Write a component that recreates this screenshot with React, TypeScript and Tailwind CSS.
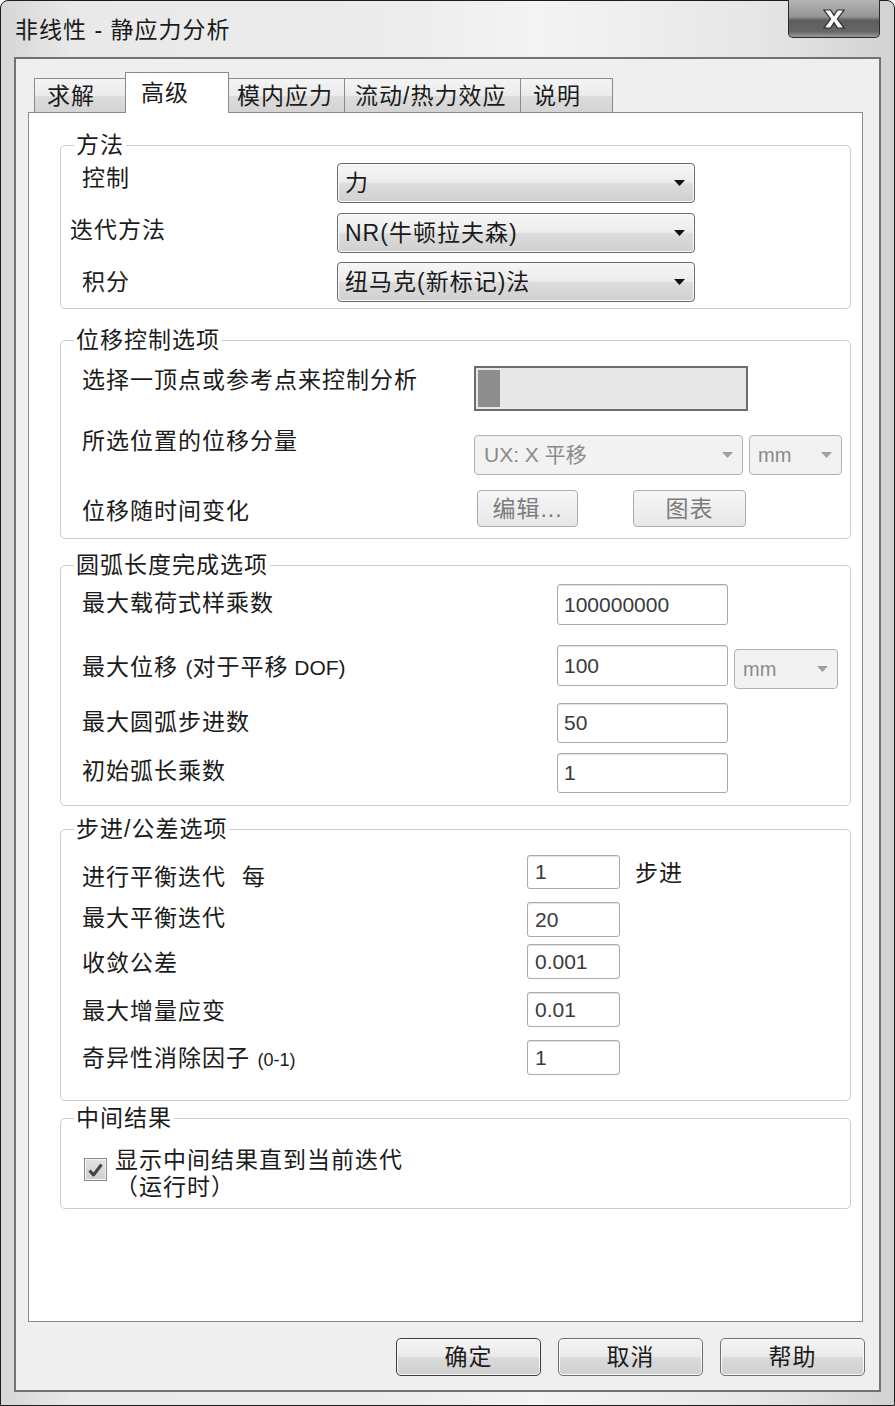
import React from "react";

const Arrow = ({ gray }: { gray?: boolean }) => (
  <svg width="11" height="6" viewBox="0 0 11 6" className="shrink-0">
    <path d="M0 0h11L5.5 6z" fill={gray ? "#a0a0a0" : "#111"} />
  </svg>
);

const Select = ({ text, className }: { text: string; className: string }) => (
  <div
    className={`flex items-center justify-between rounded-[4px] border border-[#6a6a6a] bg-[linear-gradient(180deg,#f6f6f6_0%,#ececec_48%,#dcdcdc_52%,#d0d0d0_100%)] pl-[7px] pr-[9px] shadow-[inset_0_0_0_1px_#fafafa] ${className}`}
  >
    <span>{text}</span>
    <Arrow />
  </div>
);

const DisabledSelect = ({ text, className }: { text: string; className: string }) => (
  <div
    className={`flex items-center justify-between rounded-[4px] border border-[#b2b2b2] bg-[#f2f2f2] pr-[9px] text-[#8a8a8a] ${className}`}
  >
    <span>{text}</span>
    <Arrow gray />
  </div>
);

const Input = ({ value, className }: { value: string; className: string }) => (
  <div
    className={`flex items-center rounded-[3px] border border-[#ababab] bg-white text-[21px] tracking-normal text-[#3a3a3a] shadow-[inset_0_1px_1px_#e2e2e2] ${className}`}
  >
    {value}
  </div>
);

const Group = ({
  title,
  className,
  children,
}: {
  title: string;
  className: string;
  children: React.ReactNode;
}) => (
  <fieldset className={`rounded-[5px] border border-[#cdcdcd] ${className}`}>
    <legend className="ml-[13px] px-[2px] leading-[24px]">{title}</legend>
    {children}
  </fieldset>
);

const tabs = [
  { t: "求解", cls: "w-[92px] pl-[12px]" },
  { t: "高级", cls: "w-[104px] pl-[15px]", active: true },
  { t: "模内应力", cls: "w-[117px] pl-[8px]" },
  { t: "流动/热力效应", cls: "w-[177px] pl-[10px]" },
  { t: "说明", cls: "w-[93px] pl-[12px]" },
];

export default function App() {
  return (
    <div className="h-[1406px] w-[895px] font-['Liberation_Sans','Noto_Sans_CJK_SC',sans-serif] text-[23px] leading-[24px] tracking-[1px] text-[#1b1b1b]">
      <div className="flex h-full flex-col rounded-t-[8px] border border-[#1c1c1c] bg-[linear-gradient(90deg,#d6d6d6_0%,#e9e9e9_8%,#ececec_45%,#f4f4f4_60%,#e6e6e6_85%,#d2d2d2_100%)] px-[13px] pb-[13px]">
        {/* title bar */}
        <div className="flex h-[56px] items-start justify-between">
          <div className="mt-[17px] pl-[1px]">非线性 - 静应力分析</div>
          <div className="-mt-px mr-px flex h-[38px] w-[92px] items-center justify-center rounded-b-[5px] border border-t-0 border-[#2a2a2a] bg-[linear-gradient(180deg,#b4b4b4_0%,#959595_45%,#5e5e5e_55%,#666666_85%,#9a9a9a_100%)]">
            <svg width="22" height="20" viewBox="0 0 22 20">
              <path
                d="M1 1h6.5L11 6.3 14.5 1H21l-6.6 9L21 19h-6.5L11 13.7 7.5 19H1l6.6-9z"
                fill="#fafafa"
                stroke="#2b2b2b"
                strokeWidth="1.2"
              />
            </svg>
          </div>
        </div>

        {/* client area */}
        <div className="flex flex-1 flex-col border-2 border-[#727272] bg-[#efefef] pb-[14px] pl-[12px] pr-[14px] pt-[13px]">
          <div className="flex h-[40px] items-end pl-[6px]">
            {tabs.map((tab, i) =>
              tab.active ? (
                <div
                  key={tab.t}
                  className={`relative z-10 -mb-px -ml-px flex h-[41px] items-center border border-b-0 border-[#8a8a8a] bg-white ${tab.cls}`}
                >
                  {tab.t}
                </div>
              ) : (
                <div
                  key={tab.t}
                  className={`${i === 0 ? "" : "-ml-px"} flex h-[34px] items-center border border-b-0 border-[#8a8a8a] bg-[linear-gradient(180deg,#f4f4f4_0%,#ebebeb_50%,#dcdcdc_52%,#d4d4d4_100%)] ${tab.cls}`}
                >
                  {tab.t}
                </div>
              )
            )}
          </div>

          <div className="mr-[2px] flex-1 border border-[#8a8a8a] bg-white pl-[31px] pr-[11px] pt-[20px]">
            {/* 方法 */}
            <Group title="方法" className="">
              <div className="flex flex-col gap-[10px] pb-[6px] pl-[21px] pt-[6px]">
                <div className="flex items-start">
                  <div className="mt-[3px] w-[255px]">控制</div>
                  <Select text="力" className="h-[40px] w-[358px]" />
                </div>
                <div className="flex items-start">
                  <div className="-ml-[12px] mt-[5px] w-[267px]">迭代方法</div>
                  <Select text="NR(牛顿拉夫森)" className="h-[40px] w-[358px]" />
                </div>
                <div className="-mt-px flex items-start">
                  <div className="mt-[8px] w-[255px]">积分</div>
                  <Select text="纽马克(新标记)法" className="h-[40px] w-[358px]" />
                </div>
              </div>
            </Group>

            {/* 位移控制选项 */}
            <Group title="位移控制选项" className="mt-[19px]">
              <div className="flex flex-col pb-[11px] pl-[21px] pt-[14px]">
                <div className="flex items-start">
                  <div className="mt-[2px] w-[392px]">选择一顶点或参考点来控制分析</div>
                  <div className="h-[45px] w-[274px] border-2 border-[#6c6c6c] bg-[#e8e8e8] pl-[2px] pt-[2px]">
                    <div className="h-[37px] w-[22px] bg-[#8e8e8e]" />
                  </div>
                </div>
                <div className="mt-[24px] flex items-start">
                  <div className="-mt-[6px] w-[392px]">所选位置的位移分量</div>
                  <DisabledSelect text="UX: X 平移" className="h-[40px] w-[269px] pl-[9px] text-[21px] tracking-normal" />
                  <DisabledSelect text="mm" className="ml-[6px] h-[40px] w-[93px] pl-[8px] text-[20px] tracking-normal" />
                </div>
                <div className="mt-[15px] flex items-start">
                  <div className="mt-[9px] w-[392px]">位移随时间变化</div>
                  <div className="ml-[3px] flex h-[37px] w-[101px] items-center justify-center rounded-[4px] border border-[#adadad] bg-[linear-gradient(180deg,#f7f7f7,#e7e7e7)] text-[#7c7c7c]">
                    编辑...
                  </div>
                  <div className="ml-[55px] flex h-[37px] w-[113px] items-center justify-center rounded-[4px] border border-[#adadad] bg-[linear-gradient(180deg,#f7f7f7,#e7e7e7)] text-[#7c7c7c]">
                    图表
                  </div>
                </div>
              </div>
            </Group>

            {/* 圆弧长度完成选项 */}
            <Group title="圆弧长度完成选项" className="mt-[14px]">
              <div className="flex flex-col pb-[12px] pl-[21px] pt-[7px]">
                <div className="flex items-start">
                  <div className="mt-[7px] w-[475px]">最大载荷式样乘数</div>
                  <Input value="100000000" className="h-[41px] w-[171px] pl-[6px]" />
                </div>
                <div className="mt-[20px] flex items-start">
                  <div className="mt-[10px] w-[475px]">
                    最大位移 <span className="text-[21px] tracking-normal">(</span>对于平移
                    <span className="text-[21px] tracking-normal"> DOF)</span>
                  </div>
                  <Input value="100" className="h-[41px] w-[171px] pl-[6px]" />
                  <DisabledSelect text="mm" className="ml-[6px] mt-[4px] h-[40px] w-[104px] pl-[8px] text-[20px] tracking-normal" />
                </div>
                <div className="mt-[14px] flex items-start">
                  <div className="mt-[7px] w-[475px]">最大圆弧步进数</div>
                  <Input value="50" className="h-[40px] w-[171px] pl-[6px]" />
                </div>
                <div className="mt-[10px] flex items-start">
                  <div className="mt-[6px] w-[475px]">初始弧长乘数</div>
                  <Input value="1" className="h-[40px] w-[171px] pl-[6px]" />
                </div>
              </div>
            </Group>

            {/* 步进/公差选项 */}
            <Group title="步进/公差选项" className="mt-[11px]">
              <div className="flex flex-col pb-[25px] pl-[21px] pt-[14px]">
                <div className="flex items-start">
                  <div className="mt-[10px] w-[445px]">
                    进行平衡迭代<span className="ml-[16px]">每</span>
                  </div>
                  <Input value="1" className="h-[34px] w-[93px] pl-[7px]" />
                  <div className="ml-[15px] mt-[6px]">步进</div>
                </div>
                <div className="mt-[13px] flex items-start">
                  <div className="mt-[4px] w-[445px]">最大平衡迭代</div>
                  <Input value="20" className="h-[35px] w-[93px] pl-[7px]" />
                </div>
                <div className="mt-[7px] flex items-start">
                  <div className="mt-[7px] w-[445px]">收敛公差</div>
                  <Input value="0.001" className="h-[35px] w-[93px] pl-[7px]" />
                </div>
                <div className="mt-[13px] flex items-start">
                  <div className="mt-[7px] w-[445px]">最大增量应变</div>
                  <Input value="0.01" className="h-[35px] w-[93px] pl-[7px]" />
                </div>
                <div className="mt-[13px] flex items-start">
                  <div className="mt-[6px] w-[445px]">
                    奇异性消除因子 <span className="text-[18px] tracking-normal">(0-1)</span>
                  </div>
                  <Input value="1" className="h-[35px] w-[93px] pl-[7px]" />
                </div>
              </div>
            </Group>

            {/* 中间结果 */}
            <Group title="中间结果" className="mt-[5px]">
              <div className="flex items-start pb-[7px] pl-[23px] pt-[17px]">
                <div className="mt-[11px] flex h-[23px] w-[23px] items-center justify-center border border-[#8a8a8a] bg-[linear-gradient(180deg,#e2e2e2,#cfcfcf)] shadow-[inset_0_0_0_1px_#f4f4f4]">
                  <svg width="15" height="14" viewBox="0 0 15 14">
                    <path
                      d="M1.5 7.5l4 4.5L13.5 1.5"
                      fill="none"
                      stroke="#444"
                      strokeWidth="3"
                      strokeLinejoin="round"
                    />
                  </svg>
                </div>
                <div className="ml-[8px] leading-[27px]">
                  <div>显示中间结果直到当前迭代</div>
                  <div>（运行时）</div>
                </div>
              </div>
            </Group>
          </div>

          {/* buttons */}
          <div className="mt-[16px] flex justify-end gap-[17px]">
            <div className="flex h-[38px] w-[145px] items-center justify-center rounded-[5px] border border-[#3c3c3c] bg-[linear-gradient(180deg,#f4f4f4_0%,#eaeaea_48%,#dadada_52%,#cfcfcf_100%)] shadow-[inset_0_0_0_1px_#f8f8f8]">
              确定
            </div>
            <div className="flex h-[38px] w-[145px] items-center justify-center rounded-[5px] border border-[#707070] bg-[linear-gradient(180deg,#f4f4f4_0%,#eaeaea_48%,#dadada_52%,#cfcfcf_100%)] shadow-[inset_0_0_0_1px_#f8f8f8]">
              取消
            </div>
            <div className="flex h-[38px] w-[145px] items-center justify-center rounded-[5px] border border-[#707070] bg-[linear-gradient(180deg,#f4f4f4_0%,#eaeaea_48%,#dadada_52%,#cfcfcf_100%)] shadow-[inset_0_0_0_1px_#f8f8f8]">
              帮助
            </div>
          </div>
        </div>
      </div>
    </div>
  );
}
